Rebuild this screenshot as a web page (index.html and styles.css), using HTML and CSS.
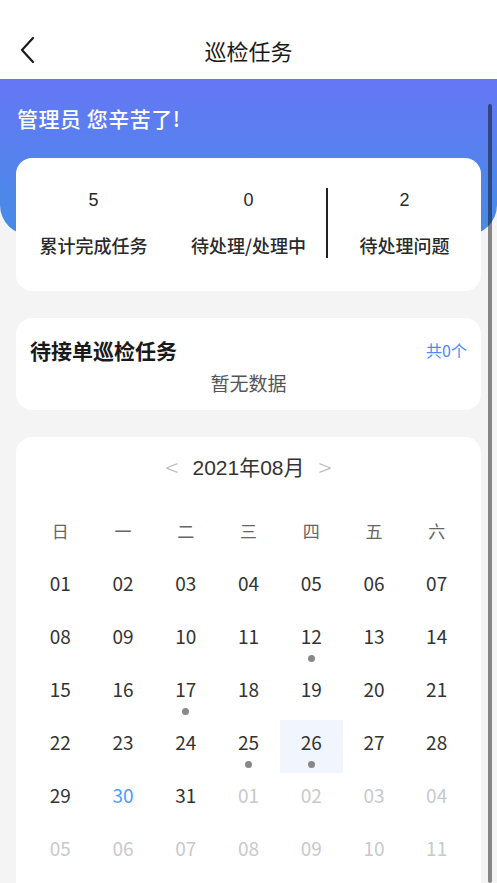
FILE: index.html
```html
<!DOCTYPE html>
<html lang="zh-CN">
<head>
    <meta charset="UTF-8">
    <meta name="viewport" content="width=device-width, initial-scale=1.0">
    <title>巡检任务</title>
    <link rel="stylesheet" href="styles.css">
</head>
<body>
    <div class="navbar">
        <div class="nav-back">
            <svg width="16" height="28" viewBox="0 0 16 28">
                <polyline points="13,2 2,14 13,26" fill="none" stroke="#1a1a1a" stroke-width="2.2" stroke-linecap="round" stroke-linejoin="round"/>
            </svg>
        </div>
        <div class="nav-title">巡检任务</div>
        <div></div>
    </div>

    <div class="banner">
        <div class="greeting">管理员 您辛苦了!</div>
    </div>

    <div class="card stats">
        <div class="stat">
            <div class="stat-num">5</div>
            <div class="stat-label">累计完成任务</div>
        </div>
        <div class="stat">
            <div class="stat-num">0</div>
            <div class="stat-label">待处理/处理中</div>
        </div>
        <div class="stat stat-split">
            <div class="stat-num">2</div>
            <div class="stat-label">待处理问题</div>
        </div>
    </div>

    <div class="card tasks">
        <div class="tasks-head">
            <span class="tasks-title">待接单巡检任务</span>
            <span class="tasks-count">共0个</span>
        </div>
        <div class="tasks-empty">暂无数据</div>
    </div>

    <div class="card calendar">
        <div class="cal-head">
            <span class="cal-arrow">&lt;</span>
            <span class="cal-month">2021年08月</span>
            <span class="cal-arrow">&gt;</span>
        </div>
        <div class="cal-week">
            <span>日</span><span>一</span><span>二</span><span>三</span><span>四</span><span>五</span><span>六</span>
        </div>
        <div class="cal-days">
            <div class="day"><span>01</span></div>
            <div class="day"><span>02</span></div>
            <div class="day"><span>03</span></div>
            <div class="day"><span>04</span></div>
            <div class="day"><span>05</span></div>
            <div class="day"><span>06</span></div>
            <div class="day"><span>07</span></div>

            <div class="day"><span>08</span></div>
            <div class="day"><span>09</span></div>
            <div class="day"><span>10</span></div>
            <div class="day"><span>11</span></div>
            <div class="day"><span>12</span><i class="dot"></i></div>
            <div class="day"><span>13</span></div>
            <div class="day"><span>14</span></div>

            <div class="day"><span>15</span></div>
            <div class="day"><span>16</span></div>
            <div class="day"><span>17</span><i class="dot"></i></div>
            <div class="day"><span>18</span></div>
            <div class="day"><span>19</span></div>
            <div class="day"><span>20</span></div>
            <div class="day"><span>21</span></div>

            <div class="day"><span>22</span></div>
            <div class="day"><span>23</span></div>
            <div class="day"><span>24</span></div>
            <div class="day"><span>25</span><i class="dot"></i></div>
            <div class="day selected"><span>26</span><i class="dot"></i></div>
            <div class="day"><span>27</span></div>
            <div class="day"><span>28</span></div>

            <div class="day"><span>29</span></div>
            <div class="day today"><span>30</span></div>
            <div class="day"><span>31</span></div>
            <div class="day other"><span>01</span></div>
            <div class="day other"><span>02</span></div>
            <div class="day other"><span>03</span></div>
            <div class="day other"><span>04</span></div>

            <div class="day other"><span>05</span></div>
            <div class="day other"><span>06</span></div>
            <div class="day other"><span>07</span></div>
            <div class="day other"><span>08</span></div>
            <div class="day other"><span>09</span></div>
            <div class="day other"><span>10</span></div>
            <div class="day other"><span>11</span></div>
        </div>
    </div>

    <div class="scroll-thumb"></div>
</body>
</html>
```

FILE: styles.css
```css
html, body {
    overflow: hidden;
}
body {
    margin: 0;
    background: #f4f4f4;
    color: #333;
    font-family: "Noto Sans CJK SC", "Noto Sans", sans-serif;
}
.navbar {
    height: 58px;
    padding-top: 21px;
    background: #fff;
    display: grid;
    grid-template-columns: 60px 1fr 60px;
    align-items: center;
}
.nav-back {
    padding-left: 20px;
    display: flex;
    align-items: center;
}
.nav-title {
    text-align: center;
    font-size: 22px;
    color: #1a1a1a;
}
.banner {
    height: 130px;
    padding: 26px 17px 0;
    background: linear-gradient(180deg, #6577f5 0%, #468ce6 100%);
    border-radius: 0 0 30px 30px;
}
.greeting {
    color: #fff;
    font-size: 21px;
    font-weight: 500;
    line-height: 26px;
    letter-spacing: 0.5px;
}
.card {
    background: #fff;
    border-radius: 16px;
    margin: 27px 16px 0;
}
.stats {
    position: relative;
    margin-top: -77px;
    padding: 30px 0 33px;
    display: grid;
    grid-template-columns: repeat(3, 1fr);
}
.stat {
    height: 70px;
    text-align: center;
}
.stat-split {
    border-left: 2px solid #222;
}
.stat-num {
    font-family: "Liberation Sans", Arial, sans-serif;
    font-size: 18px;
    line-height: 24px;
    color: #2a2a2a;
}
.stat-label {
    margin-top: 21px;
    font-size: 18px;
    font-weight: 500;
    line-height: 24px;
    color: #2a2a2a;
}
.tasks {
    padding: 18px 14px 13px;
}
.tasks-head {
    display: flex;
    justify-content: space-between;
    align-items: center;
    height: 28px;
}
.tasks-title {
    font-size: 21px;
    font-weight: bold;
    color: #1a1a1a;
}
.tasks-count {
    font-size: 16px;
    color: #4b8cf7;
}
.tasks-empty {
    margin-top: 5px;
    line-height: 28px;
    text-align: center;
    font-size: 19px;
    color: #555;
}
.calendar {
    padding: 10px 13px 20px;
}
.cal-head {
    height: 38px;
    display: flex;
    justify-content: center;
    align-items: center;
    gap: 14px;
}
.cal-month {
    font-family: "Liberation Sans", "Noto Sans CJK SC", sans-serif;
    font-size: 21px;
    color: #333;
}
.cal-arrow {
    font-size: 24px;
    color: #bbb;
    font-weight: 300;
}
.cal-week {
    margin-top: 23px;
    display: grid;
    grid-template-columns: repeat(7, 1fr);
    line-height: 46px;
    text-align: center;
    font-size: 17px;
    color: #666;
}
.cal-days {
    margin-top: 7px;
    display: grid;
    grid-template-columns: repeat(7, 1fr);
}
.day {
    height: 53px;
    padding-top: 10px;
    box-sizing: border-box;
    display: flex;
    flex-direction: column;
    align-items: center;
    font-size: 19px;
    color: #333;
}
.day span {
    line-height: 24px;
}
.day .dot {
    width: 7px;
    height: 7px;
    margin-top: 7px;
    border-radius: 50%;
    background: #888;
}
.day.selected {
    background: #f1f6fe;
}
.day.today {
    color: #4a9ef8;
}
.day.other {
    color: #c8c9cc;
}
.scroll-thumb {
    position: fixed;
    top: 104px;
    right: 5px;
    bottom: 0;
    width: 4px;
    border-radius: 2px;
    background: rgba(0, 0, 0, 0.45);
}
```
